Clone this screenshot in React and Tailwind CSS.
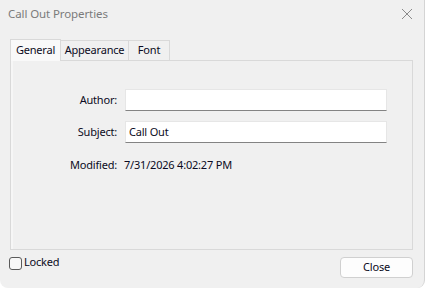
const font = { fontFamily: '"Segoe UI", "Noto Sans", "Liberation Sans", sans-serif' };

const Field = ({ label, value }) => (
  <div className="flex items-center">
    <div className="w-[104px] text-right">{label}</div>
    <div className="ml-[8px] flex h-[22px] w-[262px] items-center border border-[#e6e6e6] border-b-[#838383] bg-white px-[3px]">
      {value}
    </div>
  </div>
);

export default function App() {
  return (
    <div
      className="h-[288px] w-[427px] overflow-hidden bg-white text-[11px] tracking-[-0.2px] text-[#0b0b22]"
      style={font}
    >
      <div className="flex h-[288px] w-[425px] flex-col rounded-b-[8px] border-r border-[#d4d4d4] bg-[#f0f0f0]">
        <div className="flex h-[27px] items-center justify-between pl-[8px] pr-[10px]">
          <span className="text-[11.5px] tracking-[-0.1px] text-[#7b7b7b]">Call Out Properties</span>
          <svg width="12" height="12" viewBox="0 0 12 12" className="mr-[1px]">
            <path d="M1 1 L11 11 M11 1 L1 11" stroke="#8a8a8a" strokeWidth="1" />
          </svg>
        </div>

        <div className="ml-[10px] mt-[12px] flex items-end">
          <div className="relative z-10 -mb-[1px] flex h-[22px] w-[51px] items-center justify-center border border-b-0 border-[#d9d9d9] bg-[#f9f9f9]">
            General
          </div>
          <div className="flex h-[20px] w-[68px] items-center justify-center border border-l-0 border-b-0 border-[#d9d9d9] bg-[#f0f0f0]">
            Appearance
          </div>
          <div className="flex h-[20px] w-[41px] items-center justify-center border border-l-0 border-b-0 border-[#d9d9d9] bg-[#f0f0f0]">
            Font
          </div>
        </div>

        <div className="ml-[10px] h-[190px] w-[403px] border border-[#d9d9d9] bg-[#f0f0f0]">
          <div className="flex h-full flex-col gap-[10px] border-l-2 border-[#f6f6f6] pt-[28px]">
            <Field label="Author:" value="" />
            <Field label="Subject:" value="Call Out" />
            <div className="mt-[4px] flex">
              <div className="w-[104px] text-right">Modified:</div>
              <div className="ml-[7px]">7/31/2026 4:02:27 PM</div>
            </div>
          </div>
        </div>

        <div className="flex items-start justify-between pl-[9px] pr-[11px] pt-[6px]">
          <label className="flex items-center gap-[2px]">
            <span className="h-[13px] w-[13px] rounded-[3px] border border-[#5a5a5a] bg-[#f7f7f7]" />
            <span className="-mt-[2px]">Locked</span>
          </label>
          <button className="mt-[1px] flex h-[21px] w-[73px] items-center justify-center rounded-[4px] border border-[#d0d0d0] bg-[#fdfdfd]">
            Close
          </button>
        </div>
      </div>
    </div>
  );
}
